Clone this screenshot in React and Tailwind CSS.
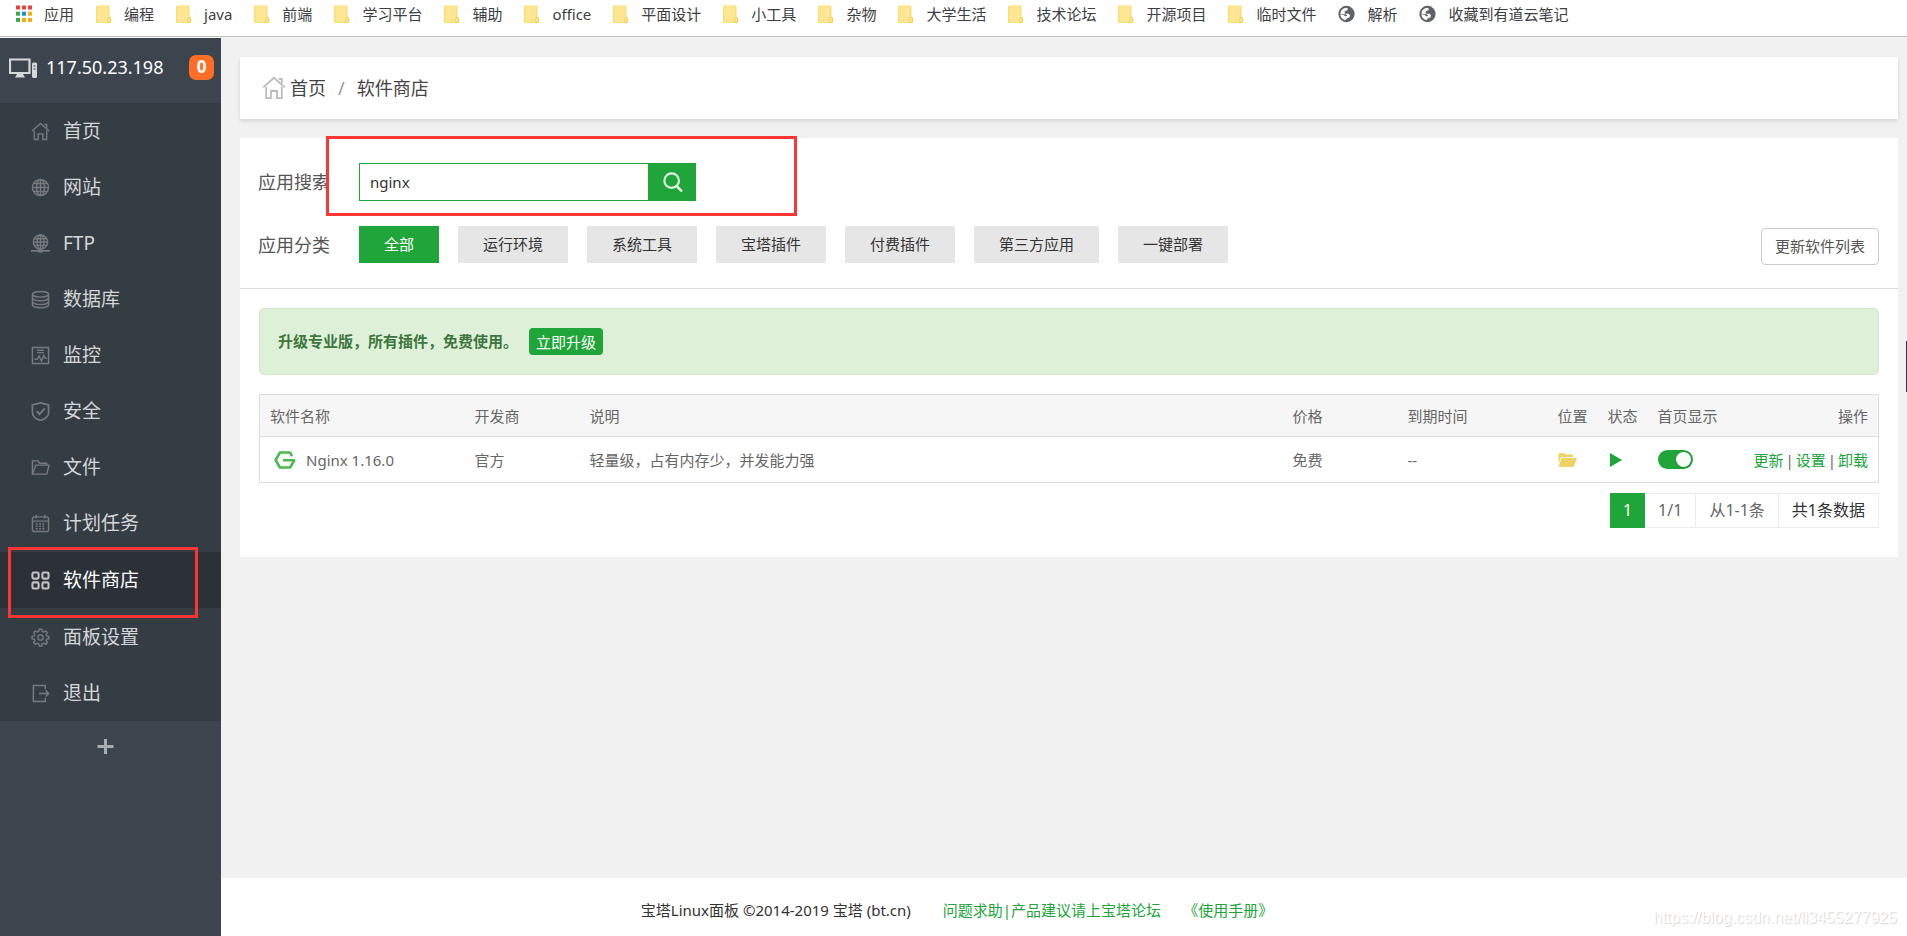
import React from "react";

const bookmarks = [
  { label: "应用", icon: "apps" },
  { label: "编程", icon: "folder" },
  { label: "java", icon: "folder" },
  { label: "前端", icon: "folder" },
  { label: "学习平台", icon: "folder" },
  { label: "辅助", icon: "folder" },
  { label: "office", icon: "folder" },
  { label: "平面设计", icon: "folder" },
  { label: "小工具", icon: "folder" },
  { label: "杂物", icon: "folder" },
  { label: "大学生活", icon: "folder" },
  { label: "技术论坛", icon: "folder" },
  { label: "开源项目", icon: "folder" },
  { label: "临时文件", icon: "folder" },
  { label: "解析", icon: "globe" },
  { label: "收藏到有道云笔记", icon: "globe" },
];

const appDots = ["#ea4335", "#ea4335", "#ea4335", "#34a853", "#1e88e5", "#fbab05", "#34a853", "#fbab05", "#fbab05"];

function BookmarkIcon({ kind }) {
  if (kind === "apps") {
    return (
      <svg className="h-[18px] w-4" viewBox="0 0 16 18" aria-hidden="true">
        {appDots.map((c, i) => (
          <rect key={i} x={(i % 3) * 6} y={0.5 + Math.floor(i / 3) * 6.2} width="4" height="4" fill={c} />
        ))}
      </svg>
    );
  }
  if (kind === "folder") {
    return (
      <svg className="h-[18px] w-4" viewBox="0 0 16 18" aria-hidden="true">
        <path d="M1 0.5h11.5a1 1 0 0 1 1 1V12l1.5 1v4a1 1 0 0 1-1 1H1a1 1 0 0 1-1-1V1.500a1 1 0 0 1 1-1z" fill="#fadf74" />
        <path d="M1.500 1.500h10.500v15.500h-10.500z" fill="#ffe694" />
        <path d="M11.800 17.500v-4c0-1.500 2.700-1.500 2.700 0v4z" fill="#ffe694" stroke="#f0cb4a" strokeWidth="0.8" />
      </svg>
    );
  }
  return (
    <svg className="h-[18px] w-[17px]" viewBox="0 0 24 24" fill="#5f6368" aria-hidden="true">
      <path d="M12 0.500a11.500 11.500 0 1 0 0 23a11.500 11.500 0 0 0 0-23zM3.400 11.500C3.700 7 7.500 3.400 12 3.300L14 4.500 13.500 6.500 9.500 8.500v3h5.500l2 2.500-1 3-3.500 1-1.500 2.500C6.500 20.500 3.300 16.500 3.400 12.500L8 13.500l2.500 2 2.500-1.500-2-1.500H7.500z" fillRule="evenodd" />
    </svg>
  );
}

const shapes = {
  home: (
    <>
      <path d="M1 9.500 10 1.500l9 8" />
      <path d="M14 2.500h2.500V6" />
      <path d="M3.500 9v9.500H7.500V12.500h5v6h4V9" />
    </>
  ),
  site: (
    <>
      <circle cx="10" cy="10" r="8.500" />
      <ellipse cx="10" cy="10" rx="4.200" ry="8.500" />
      <path d="M10 1.500v17M1.500 10h17M3 5.800h14M3 14.200h14" />
    </>
  ),
  ftp: (
    <>
      <circle cx="10" cy="8.500" r="7.500" />
      <ellipse cx="10" cy="8.500" rx="3.600" ry="7.500" />
      <path d="M10 1v15M2.500 8.500h15M4 5h12M4 12h12" />
      <path d="M0 17.700h20" strokeWidth="1.800" />
      <path d="M7.500 18h5" strokeWidth="3" />
    </>
  ),
  db: (
    <>
      <ellipse cx="10" cy="4.500" rx="8.500" ry="3" />
      <path d="M1.500 4.500v11c0 1.800 3.800 3.200 8.500 3.200s8.500-1.400 8.500-3.200v-11" />
      <path d="M1.500 8.200c0 1.800 3.800 3.200 8.500 3.200s8.500-1.400 8.500-3.200M1.500 12c0 1.800 3.800 3.200 8.500 3.200s8.500-1.400 8.500-3.200" />
    </>
  ),
  monitor: (
    <>
      <path d="M1.500 1.500h17v17h-17z" />
      <path d="M6.500 4.500h7M6.500 7h7" />
      <path d="M3.500 14h3l2-3.500 2.500 5 2.500-5.500 1.500 3h2" />
    </>
  ),
  shield: (
    <>
      <path d="M10 1 18.500 3v8c0 4-3.500 6.800-8.500 8.500C5 17.800 1.500 15 1.500 11V3z" strokeWidth="1.800" />
      <path d="m6 9.500 3 3.200 5.500-6" strokeWidth="2" />
    </>
  ),
  folder: (
    <>
      <path d="M1.500 17V3h6l1.500 2.500h7.500V8" />
      <path d="M1.500 17 5 7.500h14L16.500 17z" />
    </>
  ),
  calendar: (
    <>
      <rect x="1.500" y="3" width="17" height="15.500" rx="2" />
      <path d="M1.500 7.500h17M5.500 0.800v4M14.500 0.800v4" />
      <path d="M5 10.500h10.500M5 13h10.500M5 15.500h10.500" strokeDasharray="2 1.500" />
    </>
  ),
  store: (
    <>
      <rect x="1.500" y="1.500" width="6.500" height="6.500" rx="1.500" strokeWidth="2.200" />
      <rect x="12" y="1.500" width="6.500" height="6.500" rx="1.500" strokeWidth="2.200" />
      <rect x="1.500" y="12" width="6.500" height="6.500" rx="1.500" strokeWidth="2.200" />
      <rect x="12" y="12" width="6.500" height="6.500" rx="1.500" strokeWidth="2.200" />
    </>
  ),
  gear: (
    <>
      <path d="M8.700 1.300h2.600l0.500 2.200 1.600 0.700 2-1.200 1.800 1.800-1.200 2 0.700 1.600 2.200 0.500v2.400l-2.200 0.500-0.700 1.600 1.200 2-1.800 1.800-2-1.200-1.600 0.700-0.500 2.200H8.700l-0.500-2.200-1.600-0.700-2 1.200-1.800-1.800 1.200-2-0.700-1.600-2.200-0.500V8.900l2.200-0.500 0.700-1.600-1.200-2 1.800-1.800 2 1.200 1.600-0.700z" />
      <circle cx="10" cy="10" r="2.800" strokeWidth="1.500" />
    </>
  ),
  exit: (
    <>
      <path d="M15 5.500V1.500H2.500v17H15v-4" strokeWidth="1.600" />
      <path d="M8.500 10h10M15.500 6.800l3 3.200-3 3.200" strokeWidth="1.700" />
    </>
  ),
};

function LineIcon({ name, className }) {
  return (
    <svg className={className} viewBox="0 0 20 20" fill="none" stroke="currentColor" strokeWidth="1.500" aria-hidden="true">
      {shapes[name]}
    </svg>
  );
}

const menu = [
  { label: "首页", icon: "home" },
  { label: "网站", icon: "site" },
  { label: "FTP", icon: "ftp" },
  { label: "数据库", icon: "db" },
  { label: "监控", icon: "monitor" },
  { label: "安全", icon: "shield" },
  { label: "文件", icon: "folder" },
  { label: "计划任务", icon: "calendar" },
  { label: "软件商店", icon: "store", active: true },
  { label: "面板设置", icon: "gear" },
  { label: "退出", icon: "exit" },
];

const categories = ["全部", "运行环境", "系统工具", "宝塔插件", "付费插件", "第三方应用", "一键部署"];

function BookmarkBar() {
  return (
    <nav aria-label="书签" className="border-b border-[#f4f4f4]">
      <ul className="flex h-[37px] items-start gap-[22px] overflow-hidden border-b border-[#c0c0c0] px-4 pt-[5px] text-[15px] leading-[18px] whitespace-nowrap text-[#3c4043]">
        {bookmarks.map((b) => (
          <li key={b.label}>
            <a href="#" className="flex items-center gap-3">
              <BookmarkIcon kind={b.icon} />
              {b.label}
            </a>
          </li>
        ))}
      </ul>
    </nav>
  );
}

function Sidebar() {
  return (
    <aside className="w-[221px] shrink-0 bg-[#3c444d]">
      <div className="flex h-[65px] items-center pr-[7px] pb-[7px] pl-[9px]">
        <svg className="mt-[2px] h-5 w-7" viewBox="0 0 28 20" aria-hidden="true">
          <path d="M1 1.500h19.500v13.500H1z" fill="none" stroke="#d5d7d9" strokeWidth="2.200" />
          <path d="M8 16h6l2 3.500H6z" fill="#d5d7d9" />
          <rect x="23" y="4.500" width="5" height="15.500" rx="1.500" fill="#d5d7d9" />
          <path d="M24.500 8h2M24.500 11h2" stroke="#3c444d" />
        </svg>
        <span className="ml-[9px] text-[18px] leading-6 text-white">117.50.23.198</span>
        <span className="ml-auto flex h-[25px] w-[25px] items-center justify-center rounded-[7px] bg-[#ff6d26] text-[17px] font-bold text-white">
          0
        </span>
      </div>
      <ul className="bg-[#353d44]">
        {menu.map((m) => (
          <li key={m.label} className={m.active ? "py-px" : ""}>
            <a
              href="#"
              className={
                m.active
                  ? "flex h-14 items-center gap-[13px] bg-[#2c3138] pl-[31px] text-[19px] text-white"
                  : "flex h-14 items-center gap-[13px] pl-[31px] text-[19px] text-[#d4d6d8]"
              }
            >
              <LineIcon name={m.icon} className={m.active ? "size-[19px] text-[#c0c2c5]" : "size-[19px] text-[#767a7e]"} />
              {m.label}
            </a>
          </li>
        ))}
      </ul>
      <button type="button" aria-label="添加" className="flex h-[50px] w-[211px] items-center justify-center">
        <svg className="size-[17px]" viewBox="0 0 17 17" aria-hidden="true">
          <path d="M8.500 1v15M0.500 8.500h16" stroke="#aaadb0" strokeWidth="3" />
        </svg>
      </button>
    </aside>
  );
}

function Breadcrumb() {
  return (
    <nav aria-label="位置" className="flex h-[62px] items-center bg-white pl-[22px] text-[18px] text-[#444] shadow-[0_2px_4px_rgba(0,0,0,0.12)]">
      <LineIcon name="home" className="mr-1 size-6 text-[#bbb]" />
      <a href="#">首页</a>
      <span className="mx-3 text-[#999]">/</span>
      <span>软件商店</span>
    </nav>
  );
}

function Filters() {
  return (
    <div className="border-b border-[#ddd] pt-[25px] pr-[19px] pb-[23px] pl-[18px]">
      <form className="flex items-center" onSubmit={(e) => e.preventDefault()}>
        <label htmlFor="q" className="w-[101px] text-[18px] leading-6 text-[#555]">
          应用搜索
        </label>
        <input
          id="q"
          type="text"
          defaultValue="nginx"
          className="h-[38px] w-[290px] border border-[#20a53a] bg-white px-[10px] text-[15px] text-[#333] outline-none"
        />
        <button type="submit" aria-label="搜索" className="flex h-[38px] w-[47px] items-center justify-center bg-[#20a53a]">
          <svg className="size-5" viewBox="0 0 22 22" fill="none" stroke="#dff3e2" strokeWidth="2.400" aria-hidden="true">
            <circle cx="9.500" cy="9.500" r="8" />
            <path d="m15 15.500 5 5" strokeWidth="3" strokeLinecap="round" />
          </svg>
        </button>
      </form>
      <div className="mt-[23px] flex items-center">
        <span className="w-[101px] text-[18px] leading-6 text-[#555]">应用分类</span>
        <div className="flex gap-[19px]">
          {categories.map((c, i) => (
            <button
              key={c}
              type="button"
              className={
                i === 0
                  ? "h-[37px] bg-[#20a53a] px-[25px] text-[15px] text-white"
                  : "h-[37px] bg-[#e6e6e6] px-[25px] text-[15px] text-[#333]"
              }
            >
              {c}
            </button>
          ))}
        </div>
        <button type="button" className="mt-1 ml-auto h-[37px] rounded border border-[#ccc] bg-white px-[13px] text-[15px] text-[#555]">
          更新软件列表
        </button>
      </div>
    </div>
  );
}

function SoftwareTable() {
  return (
    <table className="mt-[19px] w-full table-fixed border-collapse border border-[#ddd] text-left text-[15px] leading-5 text-[#666]">
      <colgroup>
        <col className="w-[205px]" />
        <col className="w-[115px]" />
        <col />
        <col className="w-[115px]" />
        <col className="w-[150px]" />
        <col className="w-[50px]" />
        <col className="w-[50px]" />
        <col className="w-[82px]" />
        <col className="w-[149px]" />
      </colgroup>
      <thead>
        <tr className="h-[42px] border-b border-[#ddd] bg-[#f6f6f6] whitespace-nowrap">
          {["软件名称", "开发商", "说明", "价格", "到期时间", "位置", "状态", "首页显示"].map((h) => (
            <th key={h} scope="col" className="pl-[10px] font-normal">
              {h}
            </th>
          ))}
          <th scope="col" className="pr-[10px] text-right font-normal">
            操作
          </th>
        </tr>
      </thead>
      <tbody>
        <tr className="h-[46px] whitespace-nowrap">
          <td className="pl-[10px]">
            <a href="#" className="flex items-center gap-[10px] pl-1">
              <svg className="h-[18px] w-[22px]" viewBox="0 0 22 18" fill="none" stroke="#4cb84f" strokeWidth="2.600" aria-hidden="true">
                <path d="M18 5.200 16 1.500H6L1.600 9 6 16.500H16.200L20.200 9.300H9" strokeLinejoin="round" />
              </svg>
              Nginx 1.16.0
            </a>
          </td>
          <td className="pl-[10px]">官方</td>
          <td className="pl-[10px]">轻量级，占有内存少，并发能力强</td>
          <td className="pl-[10px]">免费</td>
          <td className="pl-[10px]">--</td>
          <td className="pl-[10px]">
            <button type="button" aria-label="打开目录" className="block">
              <svg className="h-[14px] w-[19px]" viewBox="0 0 19 14" fill="#f0d264" aria-hidden="true">
                <path d="M0.500 11V1.200L1.500 0h5l1.200 1.500h7.300V4H4L2.500 5z" />
                <path d="M3.500 5h15.500l-3.500 9H0.500z" />
              </svg>
            </button>
          </td>
          <td className="pl-[10px]">
            <button type="button" aria-label="运行中" className="block pl-[2px]">
              <svg className="h-[14px] w-[12px]" viewBox="0 0 12 14" fill="#20a53a" aria-hidden="true">
                <path d="M0 0l12 7-12 7z" />
              </svg>
            </button>
          </td>
          <td className="pl-[10px]">
            <input
              type="checkbox"
              role="switch"
              aria-label="首页显示"
              defaultChecked
              className="flex h-[19px] w-[35px] appearance-none items-center justify-start rounded-full bg-[#ccc] px-[2px] before:size-[15px] before:rounded-full before:bg-[#fafafa] before:shadow before:content-[''] checked:justify-end checked:bg-[#20a53a]"
            />
          </td>
          <td className="pr-[10px]">
            <div className="flex justify-end gap-[2px]">
              <a href="#" className="text-[#20a53a]">更新</a>
              <span>|</span>
              <a href="#" className="text-[#20a53a]">设置</a>
              <span>|</span>
              <a href="#" className="text-[#20a53a]">卸载</a>
            </div>
          </td>
        </tr>
      </tbody>
    </table>
  );
}

function Pagination() {
  return (
    <div className="mt-[10px] flex justify-end text-[16px] leading-[33px] text-[#666]">
      <span className="border border-[#20a53a] bg-[#20a53a] px-3 text-white">1</span>
      <span className="border border-l-0 border-[#ececec] px-[13px]">1/1</span>
      <span className="border border-l-0 border-[#ececec] px-[13px]">从1-1条</span>
      <span className="border border-l-0 border-[#ececec] px-[13px] text-[#333]">共1条数据</span>
    </div>
  );
}

export default function App() {
  return (
    <div className="relative flex min-h-screen flex-col overflow-hidden bg-white font-['Noto_Sans','Noto_Sans_CJK_SC',sans-serif]">
      <BookmarkBar />
      <div className="flex flex-1">
        <Sidebar />
        <div className="flex min-w-0 flex-1 flex-col bg-[#f1f1f1]">
          <main className="flex flex-1 flex-col gap-[19px] pt-[19px] pr-[9px] pl-[19px]">
            <Breadcrumb />
            <section className="bg-white">
              <Filters />
              <div className="px-[19px] pt-[19px] pb-[29px]">
                <div className="flex h-[67px] items-center gap-[11px] rounded-[5px] border border-[#d6e9c6] bg-[#dff0d8] px-[18px] text-[15px]">
                  <strong className="text-[#3c763d]">升级专业版，所有插件，免费使用。</strong>
                  <button type="button" className="h-[27px] rounded bg-[#20a53a] px-[7px] leading-[20px] text-white">
                    立即升级
                  </button>
                </div>
                <SoftwareTable />
                <Pagination />
              </div>
            </section>
          </main>
          <footer className="flex h-[58px] items-center justify-center bg-white pt-[6px] pr-[214px] text-[15px] text-[#333]">
            <span>宝塔Linux面板 ©2014-2019 宝塔 (bt.cn)</span>
            <a href="#" className="ml-8 text-[#20a53a]">问题求助|产品建议请上宝塔论坛</a>
            <a href="#" className="ml-[22px] text-[#20a53a]">《使用手册》</a>
          </footer>
        </div>
      </div>
      <div className="pointer-events-none absolute top-[136px] left-[326px] h-[80px] w-[471px] border-[3px] border-[#fd3535]" />
      <div className="pointer-events-none absolute top-[547px] left-[8px] h-[71px] w-[190px] border-[3px] border-[#fd3535]" />
      <div className="absolute top-[341px] right-0 h-[51px] w-px bg-[#33333d]" />
      <div className="pointer-events-none absolute right-[10px] bottom-[8px] font-['Liberation_Sans',sans-serif] text-[16px] leading-5 text-white [text-shadow:1px_1px_1px_#d4d4d4]">
        https://blog.csdn.net/li3455277925
      </div>
    </div>
  );
}
